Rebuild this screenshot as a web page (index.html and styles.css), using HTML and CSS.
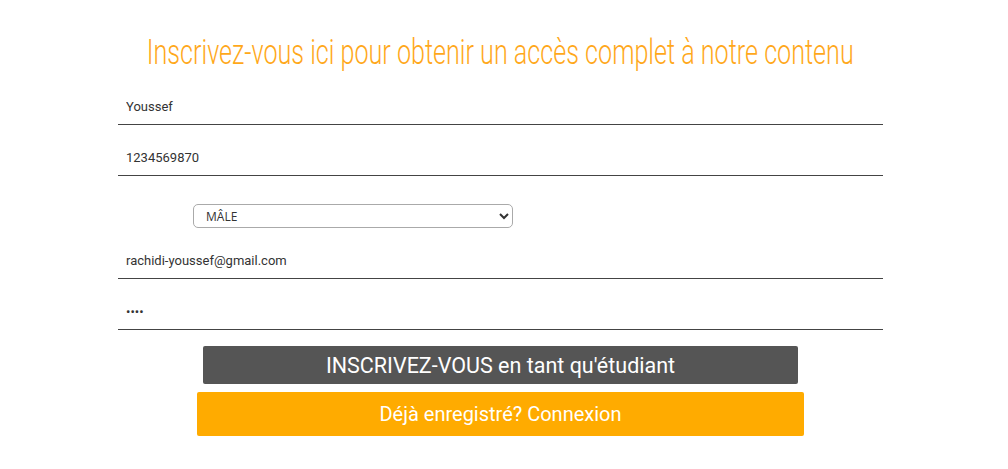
FILE: index.html
```html
<!DOCTYPE html>
<html lang="fr">
<head>
<meta charset="utf-8">
<title>Inscription</title>
<link rel="stylesheet" href="styles.css">
</head>
<body>
<div class="page">
  <h1 class="title"><span class="title-text">Inscrivez-vous ici pour obtenir un accès complet à notre contenu</span></h1>
  <form class="form">
    <input class="field" type="text" value="Youssef">
    <input class="field" type="text" value="1234569870">
    <div class="select-row">
      <select class="gender">
        <option>MÂLE</option>
        <option>FEMELLE</option>
      </select>
    </div>
    <input class="field" type="email" value="rachidi-youssef@gmail.com">
    <input class="field" type="password" value="abcd">
    <div class="actions">
      <button type="button" class="btn btn-dark">INSCRIVEZ-VOUS en tant qu'étudiant</button>
      <button type="button" class="btn btn-orange">Déjà enregistré? Connexion</button>
    </div>
  </form>
</div>
</body>
</html>
```
FILE: styles.css
```css
html, body {
  margin: 0;
  padding: 0;
  background: #ffffff;
}
.page {
  width: 1001px;
  font-family: Roboto, "Liberation Sans", sans-serif;
}
.title {
  margin: 0;
  padding-top: 33px;
  height: 56px;
  box-sizing: border-box;
  text-align: center;
  white-space: nowrap;
  font-family: Roboto, "Liberation Sans", sans-serif;
  font-weight: 300;
  font-size: 35px;
  line-height: 40px;
  color: #ffa81a;
}
.title-text {
  display: inline-block;
  transform: scaleX(0.718);
  transform-origin: center;
}
.form {
  width: 765px;
  margin: 33px auto 0;
  display: flex;
  flex-direction: column;
  gap: 15px;
}
.field {
  display: block;
  width: 100%;
  height: 36px;
  box-sizing: border-box;
  border: none;
  border-bottom: 1px solid #444;
  padding: 0 8px;
  margin: 0;
  font-family: Roboto, "Liberation Sans", sans-serif;
  font-size: 13px;
  color: #333;
  background: transparent;
  outline: none;
}
.select-row {
  padding: 13px 0 0 75px;
}
.gender {
  width: 320px;
  height: 24px;
  border: 1px solid #aaa;
  border-radius: 5px;
  padding: 0 8px;
  font-family: "Open Sans", Roboto, sans-serif;
  font-size: 12px;
  color: #333;
  background: #fff;
}
.actions {
  display: flex;
  flex-direction: column;
  align-items: center;
  gap: 8px;
  margin-top: 1px;
}
.btn {
  border: none;
  color: #fff;
  font-family: Roboto, "Liberation Sans", sans-serif;
  border-radius: 2px;
  padding: 0;
  cursor: pointer;
}
.btn-dark {
  width: 595px;
  height: 38px;
  background: #555555;
  font-size: 21.5px;
}
.btn-orange {
  width: 607px;
  height: 44px;
  background: #ffab00;
  font-size: 20px;
}
```
